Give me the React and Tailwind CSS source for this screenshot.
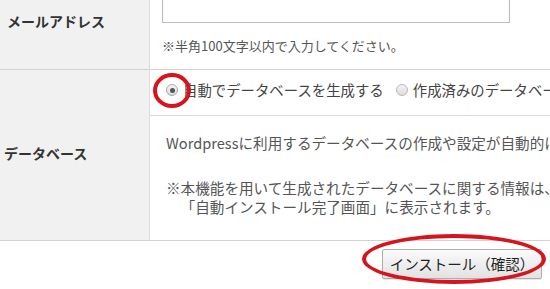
export default function App() {
  const font = { fontFamily: '"Noto Sans CJK JP", "Noto Sans", sans-serif' };

  return (
    <div className="relative w-[550px] h-[289px] overflow-hidden bg-white text-[#333]" style={font}>
      <div className="-mt-[20px]">
        {/* Email row */}
        <div className="flex h-[90px] border-b border-[#d2d2d2]">
          <div className="w-[150px] shrink-0 bg-[#f1f1f1] border-r border-[#dcdcdc] flex items-center pl-[7px] pb-[7px]">
            <span className="text-[14px] font-bold leading-none">メールアドレス</span>
          </div>
          <div className="flex-1 pl-[12px] pt-[7px]">
            <div className="w-[348px] h-[36px] border border-[#bdbdbd] shadow-[inset_0_1px_2px_rgba(0,0,0,0.08)]" />
            <p className="mt-[14px] text-[13px] leading-[17px] text-[#555]">※半角100文字以内で入力してください。</p>
          </div>
        </div>

        {/* Database row */}
        <div className="flex h-[171px] border-b border-[#d2d2d2]">
          <div className="w-[150px] shrink-0 bg-[#f1f1f1] border-r border-[#dcdcdc] flex items-center pl-[4px] pb-[5px]">
            <span className="text-[14px] font-bold leading-none">データベース</span>
          </div>
          <div className="flex-1 min-w-0">
            <div className="h-[46px] border-b border-[#dcdcdc] flex items-center pl-[16px] pb-[5px] whitespace-nowrap overflow-hidden text-[14.4px] text-[#444]">
              <span className="w-[12px] h-[12px] rounded-full border border-[#a9a9a9] bg-gradient-to-b from-[#f4f4f4] to-[#dedede] flex items-center justify-center shrink-0">
                <span className="w-[5px] h-[5px] rounded-full bg-[#555]" />
              </span>
              <span className="ml-[5px]">自動でデータベースを生成する</span>
              <span className="ml-[12px] w-[12px] h-[12px] rounded-full border border-[#b8b8b8] bg-gradient-to-b from-[#f4f4f4] to-[#dcdcdc] shrink-0" />
              <span className="ml-[5px]">作成済みのデータベースを利用する</span>
            </div>
            <div className="pl-[16px] pt-[17px] whitespace-nowrap overflow-hidden text-[14.6px] text-[#555]">
              <p className="leading-[20px]">Wordpressに利用するデータベースの作成や設定が自動的に行われます。</p>
              <p className="mt-[25px] leading-[19px]">※本機能を用いて生成されたデータベースに関する情報は、</p>
              <p className="pl-[1em] leading-[19px]">「自動インストール完了画面」に表示されます。</p>
            </div>
          </div>
        </div>
      </div>

      {/* Button */}
      <div className="flex justify-end pr-[8px] pt-[8px]">
        <button className="w-[160px] h-[30px] rounded-[2px] border border-[#adadad] bg-gradient-to-b from-[#fbfbfb] to-[#e2e2e2] text-[14.5px] text-[#222] leading-none shadow-[0_1px_1px_rgba(0,0,0,0.1)]">
          インストール（確認）
        </button>
      </div>

      {/* Red annotation marks */}
      <div className="absolute left-[153px] top-[73px] w-[38px] h-[35px] rounded-[50%] border-[4px] border-[#d5141d]" />
      <div className="absolute left-[362px] top-[234px] w-[184px] h-[50px] rounded-[50%] border-[4px] border-[#d5141d]" />
    </div>
  );
}
